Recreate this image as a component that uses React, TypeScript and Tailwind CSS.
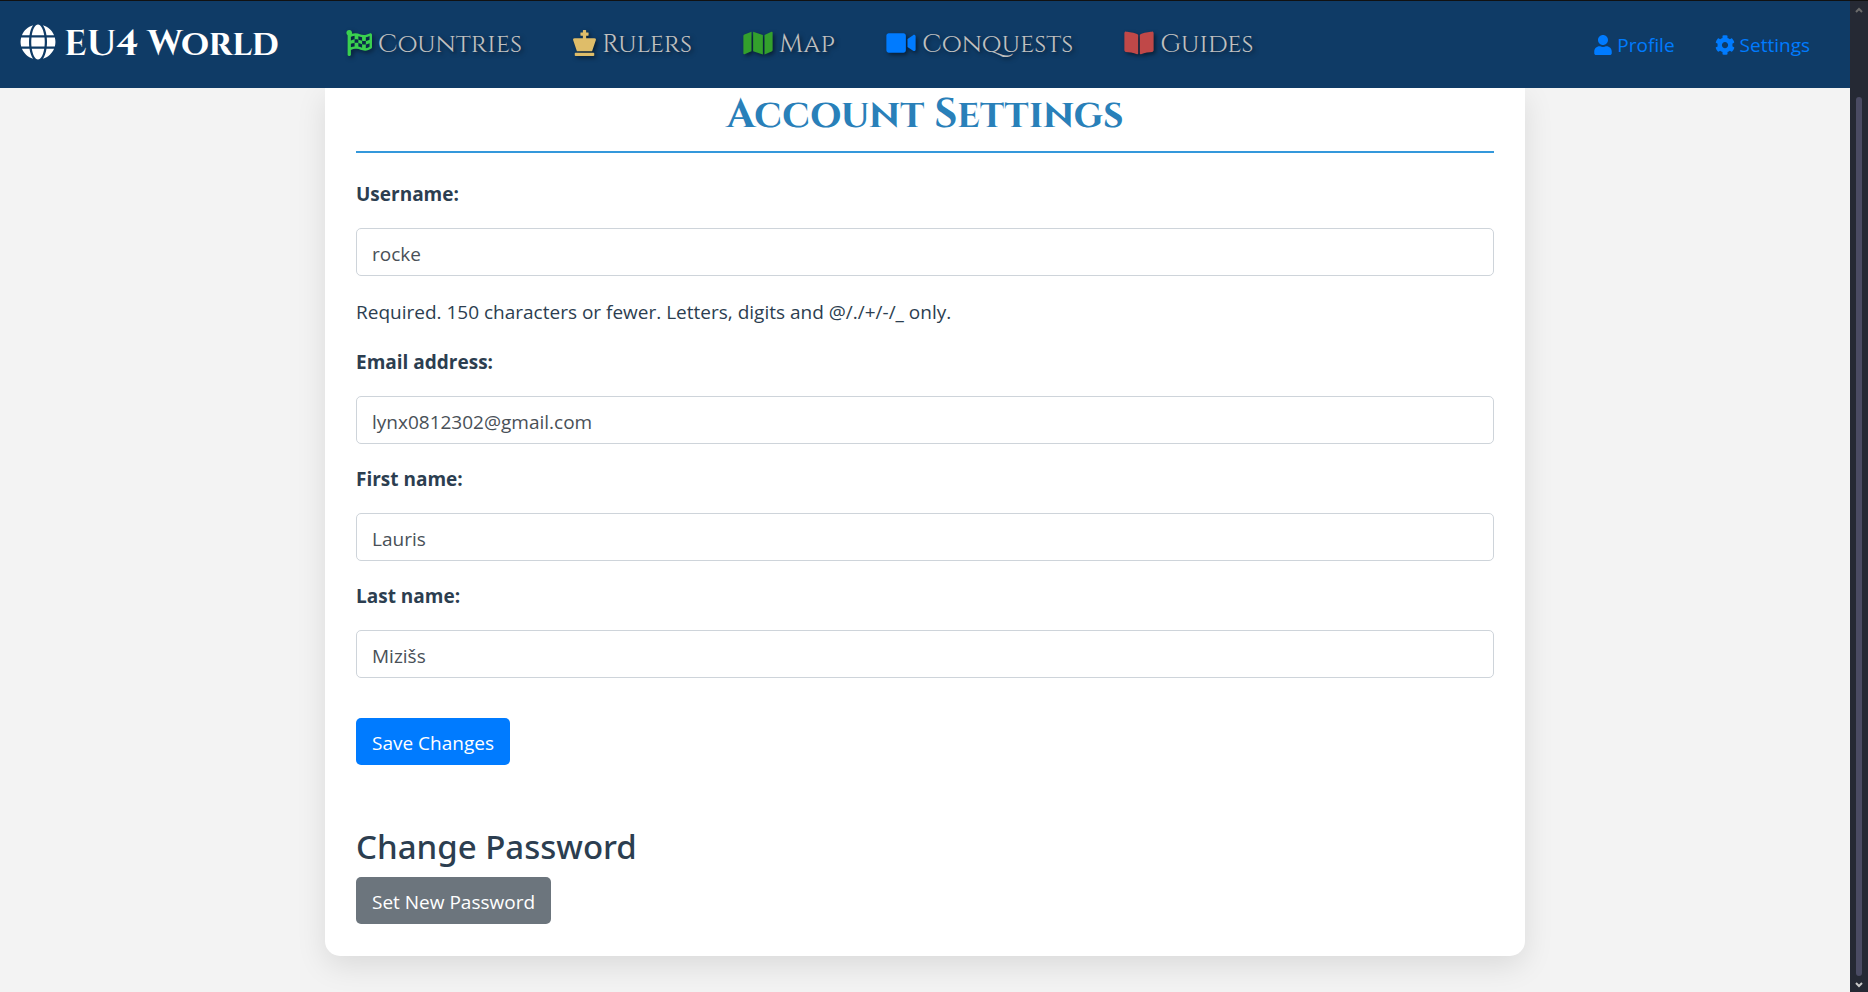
import React from "react";
import {
  FaGlobe,
  FaFlagCheckered,
  FaChessKing,
  FaMap,
  FaVideo,
  FaBookOpen,
  FaUser,
  FaCog,
} from "react-icons/fa";
import type { IconType } from "react-icons";

const serif = "font-['Cinzel','Liberation_Serif',serif]";

type NavItem = { label: string; icon: IconType; iconClass: string };

const navItems: NavItem[] = [
  { label: "Countries", icon: FaFlagCheckered, iconClass: "w-[26px] text-[#3ad14f]" },
  { label: "Rulers", icon: FaChessKing, iconClass: "w-[23px] text-[#dfbd69]" },
  { label: "Map", icon: FaMap, iconClass: "w-[30px] text-[#33a02c]" },
  { label: "Conquests", icon: FaVideo, iconClass: "w-[30px] text-[#007bff]" },
  { label: "Guides", icon: FaBookOpen, iconClass: "w-[30px] text-[#c04848]" },
];

type FieldProps = { id: string; label: string; type?: string; value: string; help?: string };

function Field({ id, label, type = "text", value, help }: FieldProps) {
  return (
    <div className="mb-5">
      <label htmlFor={id} className="mb-[19px] block text-[19px] leading-[30px] font-bold">
        {label}
      </label>
      <input
        id={id}
        type={type}
        defaultValue={value}
        aria-describedby={help ? `${id}-help` : undefined}
        className="block h-12 w-full rounded-[5px] border border-[#ced4da] bg-white px-[15px] pt-[3px] text-[19px] text-[#495057] outline-none"
      />
      {help && (
        <p id={`${id}-help`} className="mt-[21px] text-[19px] leading-[30px]">
          {help}
        </p>
      )}
    </div>
  );
}

function Scrollbar() {
  return (
    <div aria-hidden="true" className="flex w-[18px] shrink-0 flex-col items-center bg-[#252934]">
      <svg viewBox="0 0 8 6" className="mt-1.5 h-1.5 w-2" fill="none" stroke="#6b6b6b" strokeWidth="2">
        <path d="M1 5 4 2l3 3" />
      </svg>
      <div className="mt-[84px] mb-1.5 w-1.5 grow rounded-full bg-[#4a4b63]" />
      <svg viewBox="0 0 8 6" className="mb-1 h-1.5 w-2" fill="none" stroke="#c8c8c8" strokeWidth="2">
        <path d="M1 1l3 3 3-3" />
      </svg>
    </div>
  );
}

export default function App() {
  return (
    <div className="flex h-screen border-t border-[#111111] bg-[#f3f3f3] font-['Segoe_UI','Open_Sans',sans-serif] text-[#2c3e50]">
      <div className="flex min-w-0 grow flex-col overflow-hidden">
        <header className="relative flex h-[87px] shrink-0 items-center bg-[#0f3b66] pr-10 pl-5">
          <a href="#home" className={`flex items-center gap-2 pb-0.5 text-white ${serif}`}>
            <FaGlobe className="mb-1 size-9" />
            <span className="text-[36px] leading-10 font-bold">EU4 World</span>
          </a>
          <nav className={`ml-[67px] flex items-center gap-[51px] ${serif}`}>
            {navItems.map(({ label, icon: Icon, iconClass }) => (
              <a
                key={label}
                href={`#${label.toLowerCase()}`}
                className="flex items-center gap-1.5 text-[#c0c0c0] [text-shadow:2px_2px_4px_rgba(0,0,0,0.5)]"
              >
                <Icon className={`mb-1 h-[26px] drop-shadow-[2px_2px_2px_rgba(0,0,0,0.5)] ${iconClass}`} />
                <span className="text-[26px] leading-8">{label}</span>
              </a>
            ))}
          </nav>
          <div className="ml-auto flex items-center gap-10 text-[19px] text-[#007bff]">
            <a href="#profile" className="flex items-center gap-[5px] pt-0.5">
              <FaUser className="mb-0.5 h-5 w-[18px]" />
              Profile
            </a>
            <a href="#settings" className="flex items-center gap-[5px] pt-0.5">
              <FaCog className="mb-0.5 size-5" />
              Settings
            </a>
          </div>
        </header>
        <main className="flex justify-center">
          <section className="w-full max-w-[1200px] rounded-b-[15px] bg-white px-[31px] pb-8 shadow-[0_10px_30px_rgba(0,0,0,0.1)]">
            <h1
              className={`mb-[26px] h-[65px] border-b-2 border-[#3498db] text-center text-[40px] leading-[54px] font-bold text-[#2980b9] ${serif}`}
            >
              Account Settings
            </h1>
            <form onSubmit={(e) => e.preventDefault()}>
              <Field
                id="username"
                label="Username:"
                value="rocke"
                help="Required. 150 characters or fewer. Letters, digits and @/./+/-/_ only."
              />
              <Field id="email" label="Email address:" type="email" value="lynx0812302@gmail.com" />
              <Field id="first-name" label="First name:" value="Lauris" />
              <Field id="last-name" label="Last name:" value="Mizišs" />
              <button type="submit" className="mt-5 h-[47px] rounded-[5px] bg-[#007bff] px-4 pt-[3px] text-[19px] text-white">
                Save Changes
              </button>
            </form>
            <h2 className="mt-[61px] mb-[9px] font-['Noto_Sans',sans-serif] text-[33px] leading-[42px] font-medium">
              Change Password
            </h2>
            <button type="button" className="block h-[47px] rounded-[5px] bg-[#6c757d] px-4 pt-[3px] text-[19px] text-white">
              Set New Password
            </button>
          </section>
        </main>
      </div>
      <Scrollbar />
    </div>
  );
}
